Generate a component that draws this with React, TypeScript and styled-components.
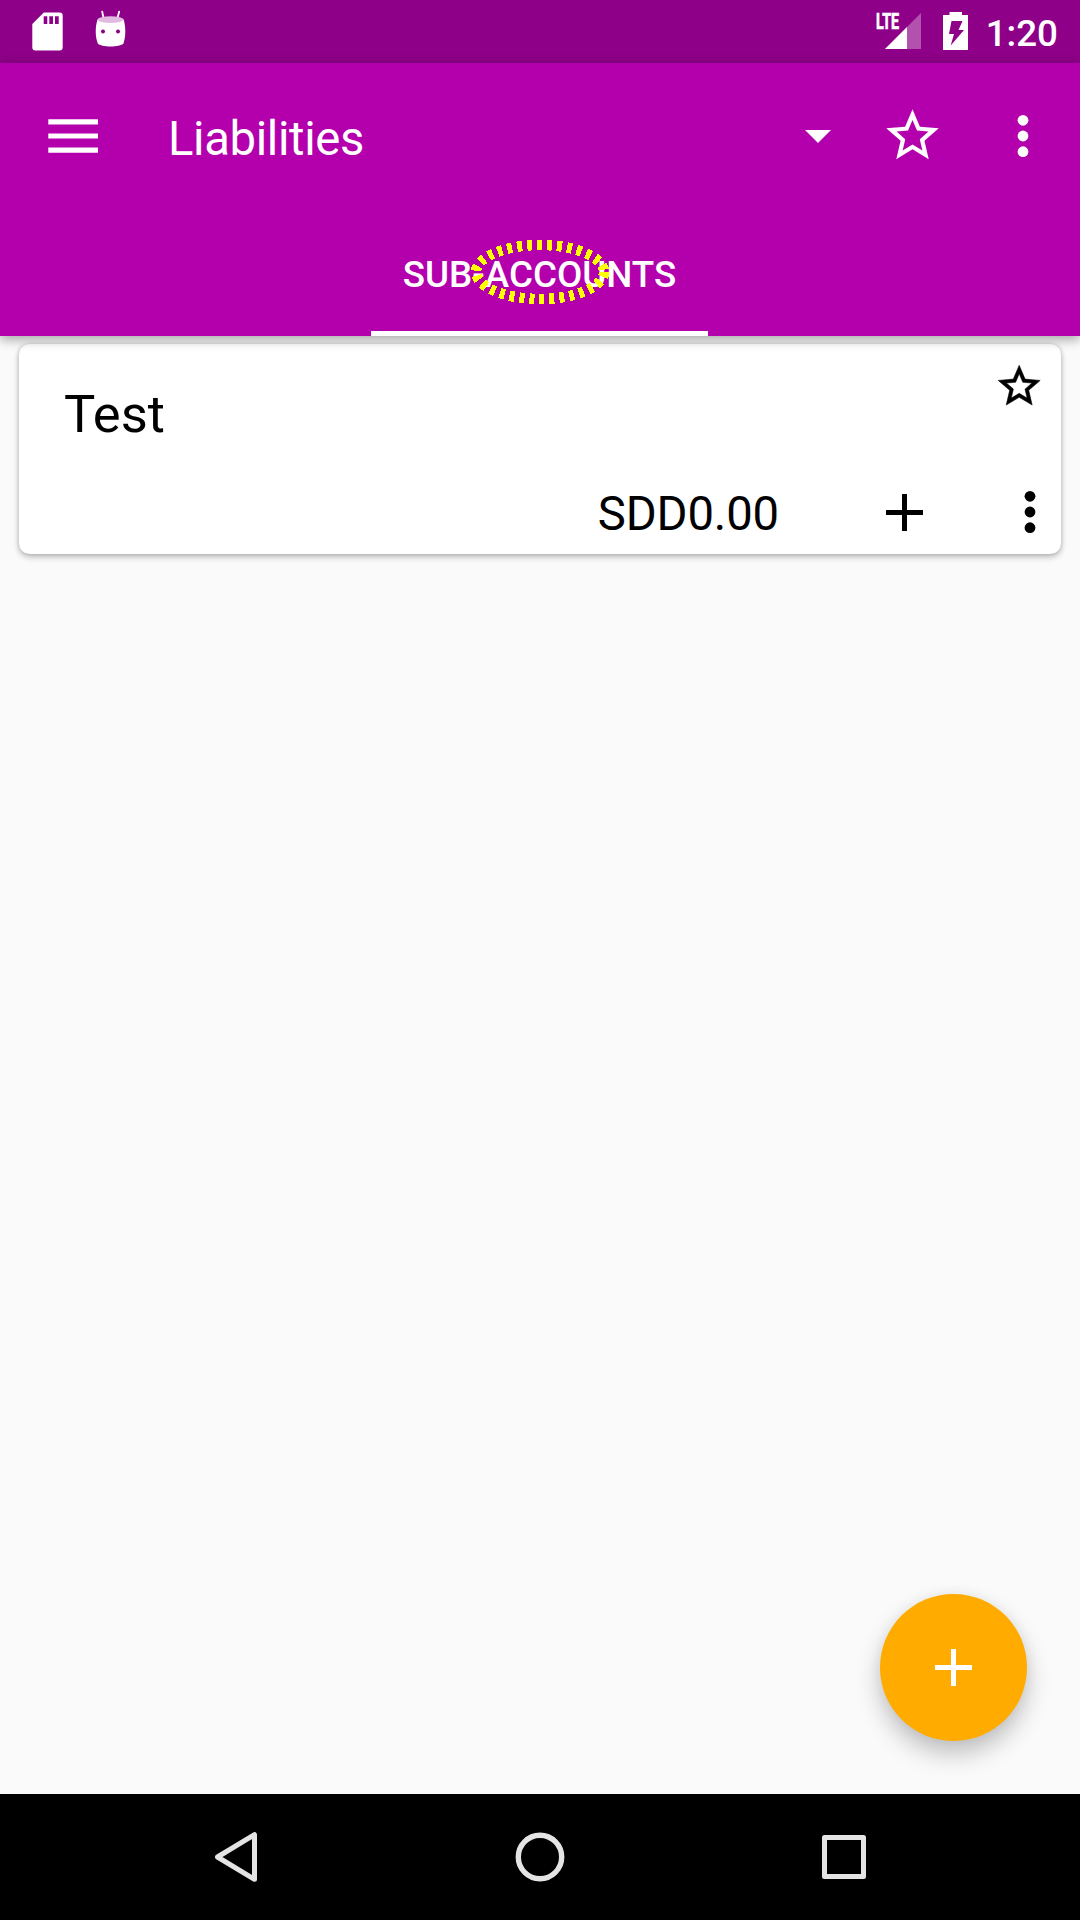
import React from 'react';
import styled, { createGlobalStyle } from 'styled-components';

const Global = createGlobalStyle`
  *, *::before, *::after { box-sizing: border-box; }
  html, body { margin: 0; padding: 0; background: #fafafa; }
  body { font-family: Roboto, "Noto Sans", sans-serif; -webkit-font-smoothing: antialiased; }
  svg { display: block; flex: none; }
`;

const Screen = styled.div`
  width: 1080px;
  height: 1920px;
  display: flex;
  flex-direction: column;
  background: #fafafa;
  overflow: hidden;
`;

const StatusBar = styled.div`
  height: 63px;
  flex: none;
  display: flex;
  align-items: center;
  justify-content: space-between;
  background: #8e0088;
  color: #fff;
  padding: 0 22px 0 16px;
`;

const StatusGroup = styled.div`
  display: flex;
  align-items: center;
`;

const Clock = styled.span`
  font-size: 36.75px;
  font-weight: 500;
  line-height: 43px;
  margin: 3px 0 0 11px;
`;

const Header = styled.header`
  flex: none;
  height: 273px;
  display: flex;
  flex-direction: column;
  background: #b300ac;
  color: #fff;
  position: relative;
  z-index: 1;
  box-shadow: 0 4px 10px rgba(0, 0, 0, 0.28), 0 1px 16px rgba(0, 0, 0, 0.08);
`;

const Toolbar = styled.div`
  height: 147px;
  display: flex;
  align-items: center;
`;

const IconButton = styled.button<{ $w: number; $h?: number }>`
  width: ${p => p.$w}px;
  height: ${p => p.$h ?? 145}px;
  flex: none;
  border: 0;
  padding: 0;
  background: none;
  color: inherit;
  display: flex;
  align-items: center;
  justify-content: center;
`;

const ToolbarButton = styled(IconButton)`
  margin-bottom: 2px;
`;

const Title = styled.h1`
  margin: 4px 0 0 23px;
  flex: 1;
  font-size: 47.25px;
  font-weight: 400;
  line-height: 56px;
  letter-spacing: -0.36px;
`;

const Tabs = styled.div`
  height: 126px;
  display: flex;
  justify-content: center;
`;

const Tab = styled.div`
  position: relative;
  width: 337px;
  margin-right: 1px;
  border-bottom: 5px solid #fff;
  display: flex;
  justify-content: center;
  padding-top: 43px;
  font-size: 36.75px;
  font-weight: 500;
  line-height: 43px;
  white-space: nowrap;
`;

const Marker = styled.svg`
  position: absolute;
  left: 94px;
  top: 24px;
`;

const Content = styled.main`
  flex: 1;
  position: relative;
  padding: 8px 19px 0;
`;

const Card = styled.article`
  height: 210px;
  background: #fff;
  border-radius: 10.5px;
  color: #000;
  display: flex;
  flex-direction: column;
  justify-content: space-between;
  box-shadow: 0 3px 6px rgba(0, 0, 0, 0.24), 0 0 4px rgba(0, 0, 0, 0.16);
`;

const CardTop = styled.div`
  display: flex;
  justify-content: space-between;
  padding: 17px 17px 0 45px;
`;

const AccountName = styled.h2`
  margin: 22px 0 0;
  font-size: 52.5px;
  font-weight: 400;
  line-height: 62px;
`;

const CardBottom = styled.div`
  height: 84px;
  display: flex;
  align-items: center;
  justify-content: flex-end;
`;

const Balance = styled.span`
  font-size: 47.25px;
  line-height: 56px;
  letter-spacing: -0.15px;
  margin: 3px 73px 0 0;
`;

const AddButton = styled(IconButton)`
  margin-right: 41px;
`;

const Fab = styled.button`
  position: absolute;
  right: 53px;
  bottom: 53px;
  width: 147px;
  height: 147px;
  border: 0;
  padding: 0;
  border-radius: 50%;
  background: #ffab00;
  color: #fff;
  display: flex;
  align-items: center;
  justify-content: center;
  box-shadow: 0 13px 24px rgba(0, 0, 0, 0.23), 0 0 14px rgba(0, 0, 0, 0.05);
`;

const NavBar = styled.nav`
  height: 126px;
  flex: none;
  background: #000;
  color: #e4e4e4;
  display: flex;
  align-items: center;
  justify-content: center;
`;

const SdCard = () => (
  <svg width="63" height="63" viewBox="0 0 63 63" fill="#fff">
    <path
      fillRule="evenodd"
      d="M27.8 12.5H43.5a3.2 3.2 0 0 1 3.2 3.2V47.3a3.2 3.2 0 0 1-3.2 3.2H19.5a3.2 3.2 0 0 1-3.2-3.2V24ZM27.7 16.3V24H31.3V16.3ZM33.3 16.3V24H37V16.3ZM39 16.3V24H42.7V16.3Z"
    />
  </svg>
);

const Robot = () => (
  <svg width="63" height="63" viewBox="0 0 63 63">
    <path d="M23.2 11.6 24.6 18.5M40.2 11.6 38.4 18.5" stroke="#fff" strokeWidth="1.8" strokeLinecap="round" />
    <path
      fill="#fff"
      fillRule="evenodd"
      d="M18.5 19.5C22 16 41.5 16 44.7 19.5 46.8 27 47 36 44.5 43.5 41 47.5 22 47.5 18.8 43.5 16 36 16.2 27 18.5 19.5ZM24 29.5a2 2 0 1 0 .01 0ZM39 29.5a2 2 0 1 0 .01 0Z"
    />
    <ellipse cx="31.5" cy="19.6" rx="12.8" ry="3.4" fill="#e2b9e1" />
  </svg>
);

const Signal = () => (
  <svg width="66" height="63" viewBox="0 0 66 63" fill="#fff">
    <path d="M49 13V49H13Z" opacity=".32" />
    <path d="M35 27V49H13Z" />
    <text
      x="4"
      y="29"
      fontSize="22"
      fontWeight="700"
      textLength="23"
      lengthAdjust="spacingAndGlyphs"
      stroke="#fff"
      strokeWidth=".7"
    >
      LTE
    </text>
  </svg>
);

const Battery = () => (
  <svg width="37" height="63" viewBox="0 0 37 63" fill="#fff">
    <path
      fillRule="evenodd"
      d="M11.5 12H24V15H30V50H5V15H11.5ZM13.5 21 11 34H16L12.7 45.5 26 30H20.5L24.5 21Z"
    />
  </svg>
);

const Menu = () => (
  <svg width="50" height="36" viewBox="0 0 50 36" fill="currentColor">
    <path d="M.3 1.3H50V6.5H.3ZM.3 15.4H50V20.6H.3ZM.3 29.5H50V34.7H.3Z" />
  </svg>
);

const Star = ({ size, weight = 0 }: { size: number; weight?: number }) => (
  <svg width={size} height={size} viewBox="0 0 24 24" fill="currentColor" stroke="currentColor" strokeWidth={weight}>
    <path d="M22 9.24l-7.19-.62L12 2 9.19 8.63 2 9.24l5.46 4.73L5.82 21 12 17.27 18.18 21l-1.63-7.03L22 9.24zM12 15.4l-3.76 2.27 1-4.28-3.32-2.88 4.38-.38L12 6.1l1.71 4.04 4.38.38-3.32 2.88 1 4.28L12 15.4z" />
  </svg>
);

const Caret = () => (
  <svg width="26" height="13" viewBox="0 0 26 13" fill="currentColor">
    <path d="M0 0H26L13 13Z" />
  </svg>
);

const Dots = () => (
  <svg width="12" height="44" viewBox="0 0 12 44" fill="currentColor">
    <circle cx="6" cy="6.3" r="5.4" />
    <circle cx="6" cy="22" r="5.4" />
    <circle cx="6" cy="37.7" r="5.4" />
  </svg>
);

const Plus = () => (
  <svg width="37" height="37" viewBox="0 0 37 37" fill="currentColor">
    <path d="M16 0H21V16H37V21H21V37H16V21H0V16H16Z" />
  </svg>
);

const Back = () => (
  <svg width="50" height="60" viewBox="0 0 50 60" fill="none" stroke="currentColor" strokeWidth="5" strokeLinejoin="round">
    <path d="M43.5 7.7V52.3L6.5 30Z" />
  </svg>
);

const Home = () => (
  <svg width="50" height="60" viewBox="0 0 50 60" fill="none" stroke="currentColor" strokeWidth="5.4">
    <circle cx="25" cy="30" r="21.7" />
  </svg>
);

const Recents = () => (
  <svg width="50" height="60" viewBox="0 0 50 60" fill="none" stroke="currentColor" strokeWidth="5" strokeLinejoin="round">
    <rect x="5.5" y="10.5" width="39" height="39" />
  </svg>
);

export default function App() {
  return (
    <>
      <Global />
      <Screen>
        <StatusBar>
          <StatusGroup>
            <SdCard />
            <Robot />
          </StatusGroup>
          <StatusGroup>
            <Signal />
            <Battery />
            <Clock>1:20</Clock>
          </StatusGroup>
        </StatusBar>
        <Header>
          <Toolbar>
            <ToolbarButton $w={145}><Menu /></ToolbarButton>
            <Title>Liabilities</Title>
            <IconButton $w={84}><Caret /></IconButton>
            <ToolbarButton $w={105}><Star size={63} /></ToolbarButton>
            <ToolbarButton $w={115}><Dots /></ToolbarButton>
          </Toolbar>
          <Tabs>
            <Tab>
              SUB-ACCOUNTS
              <Marker width="150" height="76" viewBox="0 0 150 76" fill="none" shapeRendering="crispEdges">
                <ellipse cx="75" cy="38" rx="64" ry="27" stroke="#ff0" strokeWidth="10.5" strokeDasharray="5 5" />
              </Marker>
            </Tab>
          </Tabs>
        </Header>
        <Content>
          <Card>
            <CardTop>
              <AccountName>Test</AccountName>
              <Star size={50.4} weight={0.25} />
            </CardTop>
            <CardBottom>
              <Balance>SDD0.00</Balance>
              <AddButton $w={105} $h={84}><Plus /></AddButton>
              <IconButton $w={63} $h={84}><Dots /></IconButton>
            </CardBottom>
          </Card>
          <Fab><Plus /></Fab>
        </Content>
        <NavBar>
          <IconButton $w={304} $h={126}><Back /></IconButton>
          <IconButton $w={304} $h={126}><Home /></IconButton>
          <IconButton $w={304} $h={126}><Recents /></IconButton>
        </NavBar>
      </Screen>
    </>
  );
}
